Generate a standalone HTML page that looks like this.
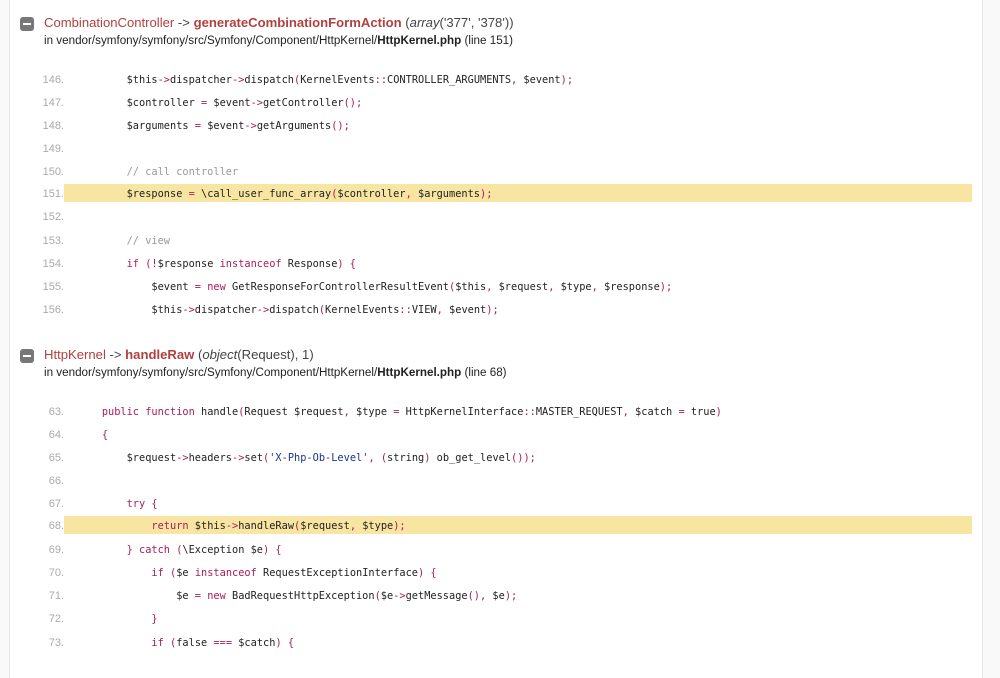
<!DOCTYPE html>
<html><head><meta charset="utf-8"><style>
body{margin:0;width:1000px;height:678px;background:#f9f9f9;overflow:hidden;position:relative;font-family:"Liberation Sans",sans-serif}
#panel{position:absolute;left:9px;top:0;width:972px;height:678px;background:#fff;border-left:1px solid #e6e6e6;border-right:1px solid #e6e6e6}
.icon{position:absolute;left:20px;width:14px;height:14px;background:#777;border-radius:3px}
.icon:after{content:"";position:absolute;left:3px;top:6px;width:8px;height:2px;background:#fff}
.t{position:absolute;left:44px;font-size:13.1px;color:#222;white-space:nowrap}
.cls{color:#b0413e}.m{color:#b0413e;font-weight:bold}.a{color:#444}
.f{position:absolute;left:44px;font-size:11.65px;color:#222;white-space:nowrap}
.ln{position:absolute;width:64px;text-align:right;font-size:11px;color:#aaa;line-height:18px;height:18px;margin-top:1px}
.c{position:absolute;left:77px;font-family:"DejaVu Sans Mono",monospace;font-size:10.3px;color:#222;white-space:pre;line-height:18px;height:18px;margin-top:1px}
.hl{position:absolute;left:64px;width:908px;height:18px;background:#f7e5a1}
.k{color:#a71d5d}.s{color:#183691}.cm{color:#999}
</style></head><body><div id="panel"></div>
<div class="icon" style="top:17px"></div>
<div class="t" style="top:15px"><span class="cls">CombinationController</span><span class="a"> -&gt; </span><span class="m">generateCombinationFormAction</span> <span class="a">(<i>array</i>('377', '378'))</span></div>
<div class="f" style="top:34px">in vendor/symfony/symfony/src/Symfony/Component/HttpKernel/<b>HttpKernel.php</b> (line 151)</div>

<div class="hl" style="top:184px"></div>
<div class="ln" style="top:70px">146.</div><div class="c" style="top:70px">        $this<span class="k">-&gt;</span>dispatcher<span class="k">-&gt;</span>dispatch<span class="k">(</span>KernelEvents<span class="k">::</span>CONTROLLER_ARGUMENTS<span class="k">,</span> $event<span class="k">);</span></div>
<div class="ln" style="top:93px">147.</div><div class="c" style="top:93px">        $controller <span class="k">=</span> $event<span class="k">-&gt;</span>getController<span class="k">();</span></div>
<div class="ln" style="top:116px">148.</div><div class="c" style="top:116px">        $arguments <span class="k">=</span> $event<span class="k">-&gt;</span>getArguments<span class="k">();</span></div>
<div class="ln" style="top:139px">149.</div>
<div class="ln" style="top:162px">150.</div><div class="c cm" style="top:162px">        // call controller</div>
<div class="ln" style="top:184px">151.</div><div class="c" style="top:184px">        $response <span class="k">=</span> \call_user_func_array<span class="k">(</span>$controller<span class="k">,</span> $arguments<span class="k">);</span></div>
<div class="ln" style="top:207px">152.</div>
<div class="ln" style="top:231px">153.</div><div class="c cm" style="top:231px">        // view</div>
<div class="ln" style="top:254px">154.</div><div class="c" style="top:254px">        <span class="k">if (!</span>$response <span class="k">instanceof</span> Response<span class="k">) {</span></div>
<div class="ln" style="top:277px">155.</div><div class="c" style="top:277px">            $event <span class="k">= new</span> GetResponseForControllerResultEvent<span class="k">(</span>$this<span class="k">,</span> $request<span class="k">,</span> $type<span class="k">,</span> $response<span class="k">);</span></div>
<div class="ln" style="top:300px">156.</div><div class="c" style="top:300px">            $this<span class="k">-&gt;</span>dispatcher<span class="k">-&gt;</span>dispatch<span class="k">(</span>KernelEvents<span class="k">::</span>VIEW<span class="k">,</span> $event<span class="k">);</span></div>

<div class="icon" style="top:349px"></div>
<div class="t" style="top:347px"><span class="cls">HttpKernel</span><span class="a"> -&gt; </span><span class="m">handleRaw</span> <span class="a">(<i>object</i>(Request), 1)</span></div>
<div class="f" style="top:366px">in vendor/symfony/symfony/src/Symfony/Component/HttpKernel/<b>HttpKernel.php</b> (line 68)</div>

<div class="hl" style="top:516px"></div>
<div class="ln" style="top:402px">63.</div><div class="c" style="top:402px">    <span class="k">public function</span> handle<span class="k">(</span>Request $request<span class="k">,</span> $type <span class="k">=</span> HttpKernelInterface<span class="k">::</span>MASTER_REQUEST<span class="k">,</span> $catch <span class="k">=</span> true<span class="k">)</span></div>
<div class="ln" style="top:425px">64.</div><div class="c" style="top:425px">    <span class="k">{</span></div>
<div class="ln" style="top:448px">65.</div><div class="c" style="top:448px">        $request<span class="k">-&gt;</span>headers<span class="k">-&gt;</span>set<span class="k">(</span><span class="s">'X-Php-Ob-Level'</span><span class="k">, (</span>string<span class="k">)</span> ob_get_level<span class="k">());</span></div>
<div class="ln" style="top:471px">66.</div>
<div class="ln" style="top:494px">67.</div><div class="c" style="top:494px">        <span class="k">try {</span></div>
<div class="ln" style="top:516px">68.</div><div class="c" style="top:516px">            <span class="k">return</span> $this<span class="k">-&gt;</span>handleRaw<span class="k">(</span>$request<span class="k">,</span> $type<span class="k">);</span></div>
<div class="ln" style="top:540px">69.</div><div class="c" style="top:540px">        <span class="k">} catch (</span>\Exception $e<span class="k">) {</span></div>
<div class="ln" style="top:563px">70.</div><div class="c" style="top:563px">            <span class="k">if (</span>$e <span class="k">instanceof</span> RequestExceptionInterface<span class="k">) {</span></div>
<div class="ln" style="top:586px">71.</div><div class="c" style="top:586px">                $e <span class="k">= new</span> BadRequestHttpException<span class="k">(</span>$e<span class="k">-&gt;</span>getMessage<span class="k">(),</span> $e<span class="k">);</span></div>
<div class="ln" style="top:609px">72.</div><div class="c" style="top:609px">            <span class="k">}</span></div>
<div class="ln" style="top:633px">73.</div><div class="c" style="top:633px">            <span class="k">if (</span>false <span class="k">===</span> $catch<span class="k">) {</span></div>
</body></html>
